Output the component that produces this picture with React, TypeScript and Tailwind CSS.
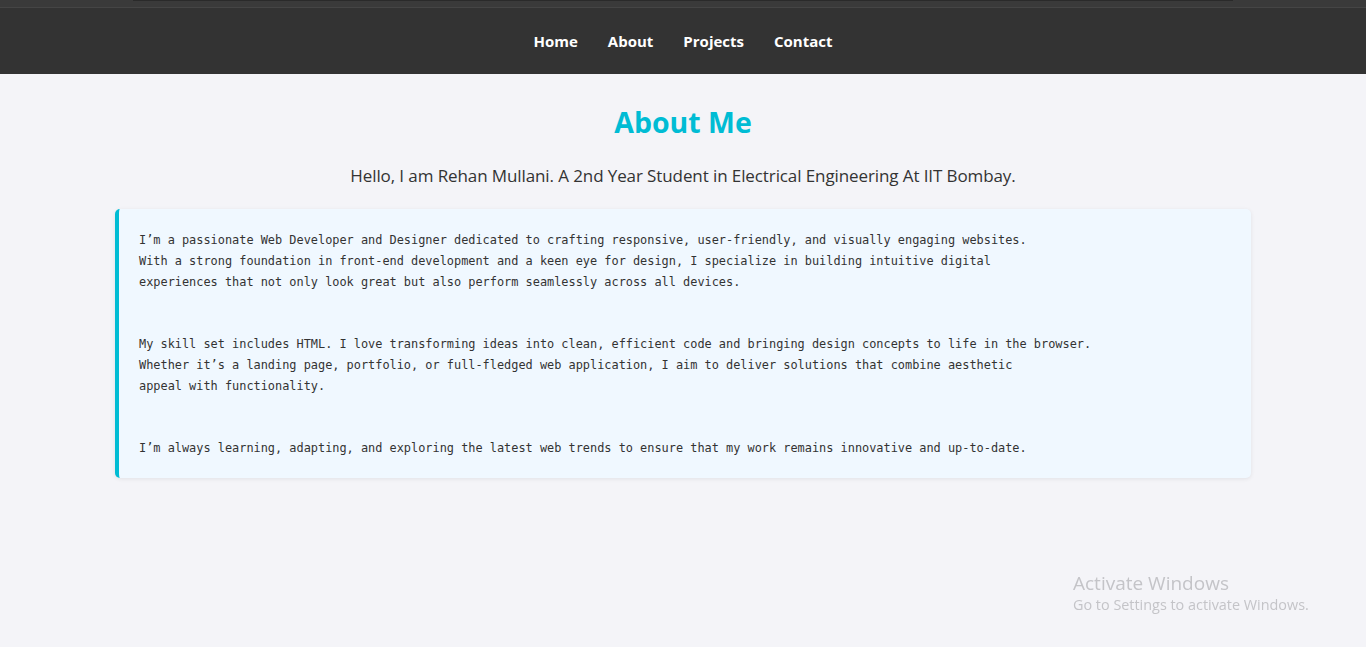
export default function App() {
  const links = ['Home', 'About', 'Projects', 'Contact'];

  return (
    <div className="min-h-[647px] bg-[#f4f4f8] font-['Open_Sans',sans-serif] text-[#333]">
      {/* top strip */}
      <div className="h-[8px] bg-[#3a3a3a] border-b border-[#454545] px-[133px]">
        <div className="h-[1px] bg-[#2a2a2a]" />
      </div>

      <nav className="h-[66px] bg-[#333333] flex items-center justify-center gap-[30px]">
        {links.map((l) => (
          <a key={l} href="#" className="text-white font-bold text-[15px]">
            {l}
          </a>
        ))}
      </nav>

      <section className="pt-[26px]">
        <h2 className="text-center text-[#00bcd4] font-bold text-[28.5px] leading-[44px]">About Me</h2>
        <p className="text-center text-[17px] leading-[28px] mt-[18px] tracking-[-0.1px]">
          Hello, I am Rehan Mullani. A 2nd Year Student in Electrical Engineering At IIT Bombay.
        </p>

        <div className="w-[1136px] mx-auto mt-[19px] bg-[#f0f8ff] border-l-4 border-[#00bcd4] rounded-[5px] shadow-[0_1px_4px_rgba(0,0,0,0.08)] px-[20px] pt-[21px] pb-[19px] font-['DejaVu_Sans_Mono',monospace] text-[11.9px] leading-[21px] text-[#333]">
          <p>
            I’m a passionate Web Developer and Designer dedicated to crafting responsive, user-friendly, and visually engaging websites.
            <br />
            With a strong foundation in front-end development and a keen eye for design, I specialize in building intuitive digital
            <br />
            experiences that not only look great but also perform seamlessly across all devices.
          </p>
          <p className="mt-[41px]">
            My skill set includes HTML. I love transforming ideas into clean, efficient code and bringing design concepts to life in the browser.
            <br />
            Whether it’s a landing page, portfolio, or full-fledged web application, I aim to deliver solutions that combine aesthetic
            <br />
            appeal with functionality.
          </p>
          <p className="mt-[41px]">
            I’m always learning, adapting, and exploring the latest web trends to ensure that my work remains innovative and up-to-date.
          </p>
        </div>
      </section>

      <div className="fixed left-[1073px] top-[570px] text-[#c4c4c8] pointer-events-none">
        <div className="text-[19px] leading-[26px]">Activate Windows</div>
        <div className="text-[14.4px] leading-[18px]">Go to Settings to activate Windows.</div>
      </div>
    </div>
  );
}
